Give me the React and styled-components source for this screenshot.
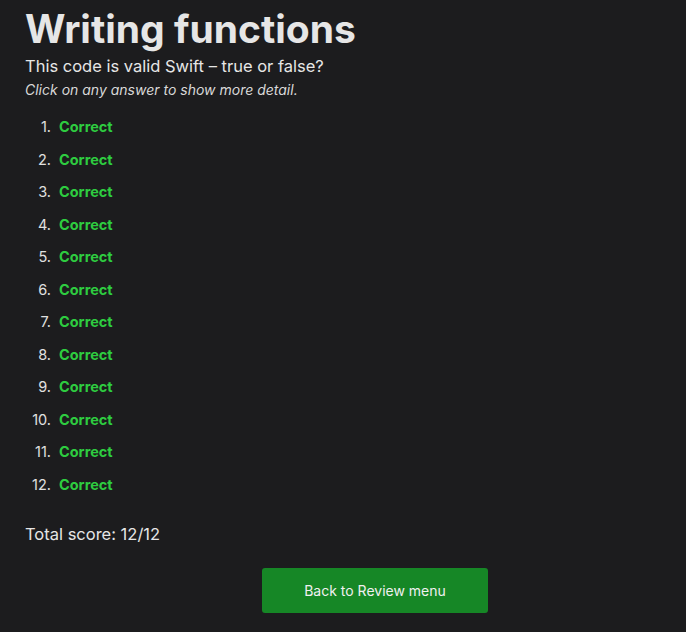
import React from 'react'
import styled, { createGlobalStyle } from 'styled-components'

const Global = createGlobalStyle`
  html, body {
    margin: 0;
    background: #1c1c1e;
    overflow: hidden;
  }
  body {
    font-family: Inter, "Noto Sans", sans-serif;
    color: #e4e4e4;
  }
`

const Page = styled.div`
  box-sizing: border-box;
  width: 686px;
  padding: 6px 25px 20px;
`

const Title = styled.h1`
  margin: 0;
  font-size: 39px;
  font-weight: 700;
  line-height: 46px;
  letter-spacing: 0;
  color: #e6e6e6;
`

const Subtitle = styled.h2`
  margin: 3px 0 0;
  font-size: 16.5px;
  font-weight: 400;
  line-height: 22px;
  color: #e6e6e6;
`

const Hint = styled.p`
  margin: 3px 0 0;
  font-size: 14px;
  font-style: italic;
  line-height: 20px;
  color: #d8d8d8;
`

const List = styled.ol`
  margin: 18px 0 0;
  padding: 0;
  list-style: none;
`

const Item = styled.li`
  display: flex;
  align-items: baseline;
  height: 32.5px;
  font-size: 14.5px;
`

const Num = styled.span`
  width: 26px;
  text-align: right;
  margin-right: 8px;
  color: #e0e0e0;
`

const Result = styled.span`
  font-weight: 700;
  color: ${p => (p.$ok ? '#2ecc40' : '#ff453a')};
  cursor: pointer;
`

const Score = styled.p`
  margin: 15px 0 0;
  font-size: 16.5px;
  line-height: 22px;
  color: #e6e6e6;
`

const Footer = styled.div`
  display: flex;
  justify-content: center;
  padding-left: 64px;
  margin-top: 23px;
`

const Button = styled.button`
  width: 226px;
  height: 45px;
  border: none;
  border-radius: 3px;
  background: #168726;
  color: #f0f0f0;
  font-family: inherit;
  font-size: 14px;
  cursor: pointer;
`

const answers = Array.from({ length: 12 }, () => true)

const App = () => {
  return (
    <Page>
      <Global />
      <Title>Writing functions</Title>
      <Subtitle>This code is valid Swift – true or false?</Subtitle>
      <Hint>Click on any answer to show more detail.</Hint>
      <List>
        {answers.map((ok, i) => (
          <Item key={i}>
            <Num>{i + 1}.</Num>
            <Result $ok={ok}>{ok ? 'Correct' : 'Wrong'}</Result>
          </Item>
        ))}
      </List>
      <Score>Total score: 12/12</Score>
      <Footer>
        <Button>Back to Review menu</Button>
      </Footer>
    </Page>
  )
}

export default App
